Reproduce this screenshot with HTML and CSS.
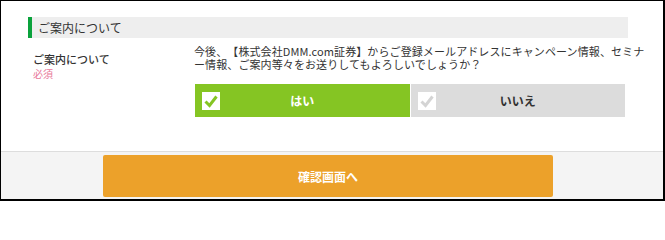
FILE: index.html
```html
<!DOCTYPE html>
<html lang="ja">
<head>
<meta charset="utf-8">
<link rel="stylesheet" href="styles.css">
</head>
<body>
<div class="page">
  <div class="main">
    <div class="section-title">ご案内について</div>
    <div class="row">
      <div class="label">
        <div class="label-text">ご案内について</div>
        <div class="required">必須</div>
      </div>
      <div class="field">
        <p class="question">今後、【株式会社DMM.com証券】からご登録メールアドレスにキャンペーン情報、セミナ<br>ー情報、ご案内等々をお送りしてもよろしいでしょうか？</p>
        <div class="choices">
          <div class="choice choice-yes">
            <span class="check"><svg viewBox="0 0 18 18" width="18" height="18"><path d="M3.5 9.5 L7.5 13.5 L14.5 4.5" fill="none" stroke="#85c523" stroke-width="3"/></svg></span>
            <span class="choice-text">はい</span>
          </div>
          <div class="choice choice-no">
            <span class="check"><svg viewBox="0 0 18 18" width="18" height="18"><path d="M3.5 9.5 L7.5 13.5 L14.5 4.5" fill="none" stroke="#d4d4d4" stroke-width="3"/></svg></span>
            <span class="choice-text">いいえ</span>
          </div>
        </div>
      </div>
    </div>
  </div>
  <div class="footer">
    <div class="submit">確認画面へ</div>
  </div>
</div>
</body>
</html>
```
FILE: styles.css
```css
html, body {
  margin: 0;
  padding: 0;
  background: #fff;
}
body {
  font-family: "Noto Sans CJK JP", "Noto Sans", sans-serif;
  color: #333;
}
.page {
  box-sizing: border-box;
  width: 665px;
  height: 201px;
  border-style: solid;
  border-color: #000;
  border-width: 1px 2px 2px 1px;
  display: flex;
  flex-direction: column;
}
.main {
  height: 150px;
  box-sizing: border-box;
  padding: 16px 35px 0 27px;
}
.section-title {
  height: 21px;
  line-height: 21px;
  background: #eee;
  border-left: 4px solid #0aa23c;
  padding-left: 6px;
  font-size: 12px;
}
.row {
  display: flex;
  margin-top: 7px;
}
.label {
  width: 161px;
  padding-left: 5px;
  padding-top: 7px;
}
.label-text {
  font-size: 11px;
  line-height: 14px;
  font-weight: 500;
}
.required {
  font-size: 10px;
  line-height: 12px;
  color: #e8789a;
  margin-top: 2px;
}
.field {
  width: 433px;
}
.question {
  margin: 0;
  font-size: 11px;
  line-height: 13px;
  letter-spacing: 0.1px;
  white-space: nowrap;
  text-spacing-trim: space-all;
}
.choices {
  display: flex;
  gap: 1px;
  width: 430px;
  margin-top: 13px;
  margin-left: 1px;
}
.choice {
  flex: 1;
  height: 33px;
  display: flex;
  align-items: center;
  position: relative;
  justify-content: center;
  font-size: 12px;
  font-weight: bold;
}
.choice-yes {
  background: #85c523;
  color: #fff;
}
.choice-no {
  background: #dcdcdc;
  color: #333;
}
.check {
  position: absolute;
  left: 7px;
  top: 8px;
  width: 18px;
  height: 18px;
  background: #fff;
  display: block;
}
.check svg {
  display: block;
}
.footer {
  flex: 1;
  background: #f4f4f4;
  border-top: 1px solid #ddd;
  padding: 3px 35px 0 27px;
}
.submit {
  width: 450px;
  height: 42px;
  margin: 0 auto;
  background: #eca12a;
  border-radius: 2px;
  color: #fff;
  font-size: 12px;
  font-weight: bold;
  display: flex;
  align-items: center;
  justify-content: center;
}
```
